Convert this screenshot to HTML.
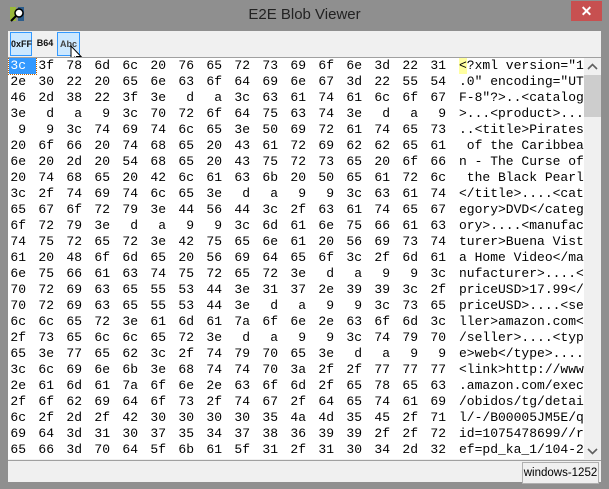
<!DOCTYPE html>
<html><head><meta charset="utf-8"><style>
*{margin:0;padding:0;box-sizing:border-box}
body{width:609px;height:489px;background:#8f8f8f;position:relative;overflow:hidden;font-family:"Liberation Sans",sans-serif}
.title{position:absolute;left:0;top:0;width:609px;height:30px;text-align:center;line-height:30px;font-size:15px;color:#222}
.close{position:absolute;left:571px;top:1px;width:31px;height:20px;background:#c75050;color:#fff;text-align:center;line-height:20px;font-size:14px;font-weight:bold}
.client{position:absolute;left:8px;top:31px;width:593px;height:451px;background:#f0f0f0}
.tb{position:absolute;top:1px;height:24px;font-size:9px;line-height:22px;text-align:center;font-weight:bold;color:#111}
.sel{background:#cce8ff;border:1px solid #3399ff}
.content{position:absolute;left:0;top:26px;width:593px;height:402px;background:#fff;border-top:1px solid #a0a0a0;font-family:"Liberation Mono",monospace;font-size:13px;color:#000;overflow:hidden}
.row{position:absolute;left:-10px;height:16px;line-height:16px;white-space:pre}
.row span{display:inline-block;width:28px;text-align:right}
.txt{position:absolute;left:451px;height:16px;line-height:16px;white-space:pre}
.sb{position:absolute;left:576px;top:0;width:17px;height:401px;background:#f0f0f0}
.status{position:absolute;left:0;top:429px;width:593px;height:22px;border-top:1px solid #a0a0a0;background:#f0f0f0}
.enc{position:absolute;left:514px;top:1px;width:77px;height:22px;border:1px solid #b0b0b0;background:#f0f0f0;font-size:11.5px;line-height:20px;text-align:center;color:#000;white-space:nowrap;overflow:hidden}
</style></head><body>
<svg style="position:absolute;left:8px;top:5px" width="18" height="18" viewBox="0 0 18 18"><rect x="2" y="2" width="6" height="14" fill="#9ab83a"/><rect x="10" y="2" width="6" height="14" fill="#2c5d8c"/><circle cx="11" cy="8" r="4" fill="#fff" stroke="#000" stroke-width="1.5"/><line x1="8" y1="11" x2="3" y2="16" stroke="#000" stroke-width="2"/></svg>
<div class="title">E2E Blob Viewer</div>
<div class="close">✕</div>
<div class="client">
<div class="tb sel" style="left:2px;width:22px">0xFF</div>
<div class="tb" style="left:28px;width:18px">B64</div>
<div class="tb sel" style="left:49px;width:23px;color:#444">Abc</div>
<svg style="position:absolute;left:62px;top:14px" width="14" height="20" viewBox="0 0 14 20"><path d="M1 1 L1 15 L4.5 12 L7 18 L9 17 L6.5 11.5 L11 11.5 Z" fill="#fff" stroke="#000" stroke-width="1"/></svg>
<div class="content">
<div style="position:absolute;left:1px;top:0;width:27px;height:16px;background:#3399ff;outline:1px dotted #c06000"></div>
<div style="position:absolute;left:451px;top:0;width:8px;height:16px;background:#ffffa0"></div>
<div class="row" style="top:0px;color:#000"><span style="color:#fff">3c</span><span>3f</span><span>78</span><span>6d</span><span>6c</span><span>20</span><span>76</span><span>65</span><span>72</span><span>73</span><span>69</span><span>6f</span><span>6e</span><span>3d</span><span>22</span><span>31</span></div>
<div class="txt" style="top:0px">&lt;?xml version="1</div>
<div class="row" style="top:16px"><span>2e</span><span>30</span><span>22</span><span>20</span><span>65</span><span>6e</span><span>63</span><span>6f</span><span>64</span><span>69</span><span>6e</span><span>67</span><span>3d</span><span>22</span><span>55</span><span>54</span></div>
<div class="txt" style="top:16px">.0" encoding="UT</div>
<div class="row" style="top:32px"><span>46</span><span>2d</span><span>38</span><span>22</span><span>3f</span><span>3e</span><span>d</span><span>a</span><span>3c</span><span>63</span><span>61</span><span>74</span><span>61</span><span>6c</span><span>6f</span><span>67</span></div>
<div class="txt" style="top:32px">F-8"?&gt;..&lt;catalog</div>
<div class="row" style="top:48px"><span>3e</span><span>d</span><span>a</span><span>9</span><span>3c</span><span>70</span><span>72</span><span>6f</span><span>64</span><span>75</span><span>63</span><span>74</span><span>3e</span><span>d</span><span>a</span><span>9</span></div>
<div class="txt" style="top:48px">&gt;...&lt;product&gt;...</div>
<div class="row" style="top:64px"><span>9</span><span>9</span><span>3c</span><span>74</span><span>69</span><span>74</span><span>6c</span><span>65</span><span>3e</span><span>50</span><span>69</span><span>72</span><span>61</span><span>74</span><span>65</span><span>73</span></div>
<div class="txt" style="top:64px">..&lt;title&gt;Pirates</div>
<div class="row" style="top:80px"><span>20</span><span>6f</span><span>66</span><span>20</span><span>74</span><span>68</span><span>65</span><span>20</span><span>43</span><span>61</span><span>72</span><span>69</span><span>62</span><span>62</span><span>65</span><span>61</span></div>
<div class="txt" style="top:80px"> of the Caribbea</div>
<div class="row" style="top:96px"><span>6e</span><span>20</span><span>2d</span><span>20</span><span>54</span><span>68</span><span>65</span><span>20</span><span>43</span><span>75</span><span>72</span><span>73</span><span>65</span><span>20</span><span>6f</span><span>66</span></div>
<div class="txt" style="top:96px">n - The Curse of</div>
<div class="row" style="top:112px"><span>20</span><span>74</span><span>68</span><span>65</span><span>20</span><span>42</span><span>6c</span><span>61</span><span>63</span><span>6b</span><span>20</span><span>50</span><span>65</span><span>61</span><span>72</span><span>6c</span></div>
<div class="txt" style="top:112px"> the Black Pearl</div>
<div class="row" style="top:128px"><span>3c</span><span>2f</span><span>74</span><span>69</span><span>74</span><span>6c</span><span>65</span><span>3e</span><span>d</span><span>a</span><span>9</span><span>9</span><span>3c</span><span>63</span><span>61</span><span>74</span></div>
<div class="txt" style="top:128px">&lt;/title&gt;....&lt;cat</div>
<div class="row" style="top:144px"><span>65</span><span>67</span><span>6f</span><span>72</span><span>79</span><span>3e</span><span>44</span><span>56</span><span>44</span><span>3c</span><span>2f</span><span>63</span><span>61</span><span>74</span><span>65</span><span>67</span></div>
<div class="txt" style="top:144px">egory&gt;DVD&lt;/categ</div>
<div class="row" style="top:160px"><span>6f</span><span>72</span><span>79</span><span>3e</span><span>d</span><span>a</span><span>9</span><span>9</span><span>3c</span><span>6d</span><span>61</span><span>6e</span><span>75</span><span>66</span><span>61</span><span>63</span></div>
<div class="txt" style="top:160px">ory&gt;....&lt;manufac</div>
<div class="row" style="top:176px"><span>74</span><span>75</span><span>72</span><span>65</span><span>72</span><span>3e</span><span>42</span><span>75</span><span>65</span><span>6e</span><span>61</span><span>20</span><span>56</span><span>69</span><span>73</span><span>74</span></div>
<div class="txt" style="top:176px">turer&gt;Buena Vist</div>
<div class="row" style="top:192px"><span>61</span><span>20</span><span>48</span><span>6f</span><span>6d</span><span>65</span><span>20</span><span>56</span><span>69</span><span>64</span><span>65</span><span>6f</span><span>3c</span><span>2f</span><span>6d</span><span>61</span></div>
<div class="txt" style="top:192px">a Home Video&lt;/ma</div>
<div class="row" style="top:208px"><span>6e</span><span>75</span><span>66</span><span>61</span><span>63</span><span>74</span><span>75</span><span>72</span><span>65</span><span>72</span><span>3e</span><span>d</span><span>a</span><span>9</span><span>9</span><span>3c</span></div>
<div class="txt" style="top:208px">nufacturer&gt;....&lt;</div>
<div class="row" style="top:224px"><span>70</span><span>72</span><span>69</span><span>63</span><span>65</span><span>55</span><span>53</span><span>44</span><span>3e</span><span>31</span><span>37</span><span>2e</span><span>39</span><span>39</span><span>3c</span><span>2f</span></div>
<div class="txt" style="top:224px">priceUSD&gt;17.99&lt;/</div>
<div class="row" style="top:240px"><span>70</span><span>72</span><span>69</span><span>63</span><span>65</span><span>55</span><span>53</span><span>44</span><span>3e</span><span>d</span><span>a</span><span>9</span><span>9</span><span>3c</span><span>73</span><span>65</span></div>
<div class="txt" style="top:240px">priceUSD&gt;....&lt;se</div>
<div class="row" style="top:256px"><span>6c</span><span>6c</span><span>65</span><span>72</span><span>3e</span><span>61</span><span>6d</span><span>61</span><span>7a</span><span>6f</span><span>6e</span><span>2e</span><span>63</span><span>6f</span><span>6d</span><span>3c</span></div>
<div class="txt" style="top:256px">ller&gt;amazon.com&lt;</div>
<div class="row" style="top:272px"><span>2f</span><span>73</span><span>65</span><span>6c</span><span>6c</span><span>65</span><span>72</span><span>3e</span><span>d</span><span>a</span><span>9</span><span>9</span><span>3c</span><span>74</span><span>79</span><span>70</span></div>
<div class="txt" style="top:272px">/seller&gt;....&lt;typ</div>
<div class="row" style="top:288px"><span>65</span><span>3e</span><span>77</span><span>65</span><span>62</span><span>3c</span><span>2f</span><span>74</span><span>79</span><span>70</span><span>65</span><span>3e</span><span>d</span><span>a</span><span>9</span><span>9</span></div>
<div class="txt" style="top:288px">e&gt;web&lt;/type&gt;....</div>
<div class="row" style="top:304px"><span>3c</span><span>6c</span><span>69</span><span>6e</span><span>6b</span><span>3e</span><span>68</span><span>74</span><span>74</span><span>70</span><span>3a</span><span>2f</span><span>2f</span><span>77</span><span>77</span><span>77</span></div>
<div class="txt" style="top:304px">&lt;link&gt;http://www</div>
<div class="row" style="top:320px"><span>2e</span><span>61</span><span>6d</span><span>61</span><span>7a</span><span>6f</span><span>6e</span><span>2e</span><span>63</span><span>6f</span><span>6d</span><span>2f</span><span>65</span><span>78</span><span>65</span><span>63</span></div>
<div class="txt" style="top:320px">.amazon.com/exec</div>
<div class="row" style="top:336px"><span>2f</span><span>6f</span><span>62</span><span>69</span><span>64</span><span>6f</span><span>73</span><span>2f</span><span>74</span><span>67</span><span>2f</span><span>64</span><span>65</span><span>74</span><span>61</span><span>69</span></div>
<div class="txt" style="top:336px">/obidos/tg/detai</div>
<div class="row" style="top:352px"><span>6c</span><span>2f</span><span>2d</span><span>2f</span><span>42</span><span>30</span><span>30</span><span>30</span><span>30</span><span>35</span><span>4a</span><span>4d</span><span>35</span><span>45</span><span>2f</span><span>71</span></div>
<div class="txt" style="top:352px">l/-/B00005JM5E/q</div>
<div class="row" style="top:368px"><span>69</span><span>64</span><span>3d</span><span>31</span><span>30</span><span>37</span><span>35</span><span>34</span><span>37</span><span>38</span><span>36</span><span>39</span><span>39</span><span>2f</span><span>2f</span><span>72</span></div>
<div class="txt" style="top:368px">id=1075478699//r</div>
<div class="row" style="top:384px"><span>65</span><span>66</span><span>3d</span><span>70</span><span>64</span><span>5f</span><span>6b</span><span>61</span><span>5f</span><span>31</span><span>2f</span><span>31</span><span>30</span><span>34</span><span>2d</span><span>32</span></div>
<div class="txt" style="top:384px">ef=pd_ka_1/104-2</div>
<div class="sb">
<svg style="position:absolute;left:3px;top:5px" width="11" height="8" viewBox="0 0 11 8"><path d="M1 6 L5.5 1.5 L10 6" fill="none" stroke="#606060" stroke-width="1.6"/></svg>
<div style="position:absolute;left:0;top:17px;width:17px;height:42px;background:#cdcdcd"></div>
<svg style="position:absolute;left:3px;top:389px" width="11" height="8" viewBox="0 0 11 8"><path d="M1 2 L5.5 6.5 L10 2" fill="none" stroke="#606060" stroke-width="1.6"/></svg>
</div>
</div>
<div class="status"><div class="enc">windows-1252</div></div>
</div>
</body></html>
